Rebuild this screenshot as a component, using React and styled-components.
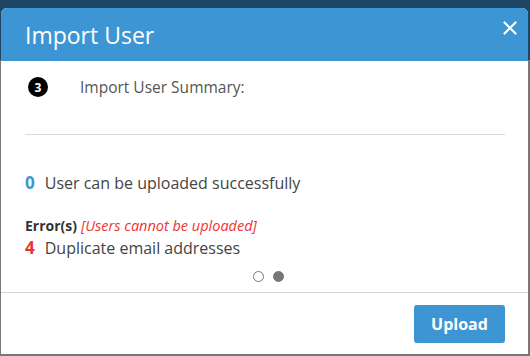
import React from "react";
import styled, { createGlobalStyle } from "styled-components";

const Global = createGlobalStyle`
  html, body { margin: 0; padding: 0; }
  body {
    width: 530px;
    height: 356px;
    overflow: hidden;
    background: linear-gradient(to bottom, #1d4566 0, #1d4566 60px, #777 60px, #777 100%);
    font-family: "Open Sans", "Lato", sans-serif;
  }
`;

const Page = styled.div`
  padding: 8px 2px 2px 1px;
  height: 356px;
  box-sizing: border-box;
  display: flex;
`;

const Modal = styled.div`
  flex: 1;
  display: flex;
  flex-direction: column;
  background: #fff;
  border-radius: 6px 6px 0 0;
  overflow: hidden;
`;

const Header = styled.div`
  height: 53px;
  background: #3d96d3;
  display: flex;
  align-items: center;
  justify-content: space-between;
  padding: 0 8px 0 24px;
  color: #fff;
`;

const Title = styled.h1`
  margin: 0;
  font-size: 23px;
  font-weight: 400;
`;

const Close = styled.button`
  border: 0;
  background: none;
  color: #fff;
  padding: 0;
  width: 20px;
  height: 20px;
  margin-top: -14px;
  display: flex;
  align-items: center;
  justify-content: center;
`;

const Body = styled.div`
  flex: 1;
  padding: 16px 23px 0 24px;
  display: flex;
  flex-direction: column;
`;

const StepRow = styled.div`
  display: flex;
  align-items: center;
  gap: 32px;
  padding-left: 3px;
  height: 20px;
`;

const StepBadge = styled.span`
  width: 20px;
  height: 20px;
  border-radius: 50%;
  background: #000;
  color: #fff;
  font-weight: 700;
  font-size: 12px;
  display: flex;
  align-items: center;
  justify-content: center;
`;

const StepLabel = styled.span`
  color: #555;
  font-size: 15.5px;
`;

const Divider = styled.hr`
  border: 0;
  border-top: 1px solid #d9d9d9;
  margin: 37px 0 0;
`;

const Line = styled.div`
  display: flex;
  align-items: baseline;
  gap: 10px;
  color: #444;
  font-size: 16px;
  line-height: 20px;
  margin-top: ${(p) => p.$mt || 0}px;
`;

const Count = styled.span`
  font-weight: 700;
  font-size: 17px;
  color: ${(p) => p.$color};
`;

const ErrorTitle = styled.div`
  display: flex;
  align-items: baseline;
  gap: 4px;
  margin-top: 24px;
  color: #333;
  font-size: 14px;
  line-height: 18px;
  font-weight: 700;
`;

const ErrorNote = styled.span`
  color: #ee3333;
  font-size: 14.5px;
  font-style: italic;
  font-weight: 400;
`;

const Dots = styled.div`
  display: flex;
  justify-content: center;
  gap: 9px;
  margin-top: 13px;
  padding-left: 7px;
`;

const Dot = styled.span`
  width: 9px;
  height: 9px;
  border-radius: 50%;
  border: 1px solid #777;
  background: ${(p) => (p.$active ? "#777" : "#fff")};
`;

const Footer = styled.div`
  border-top: 1px solid #d4d4d4;
  height: 62px;
  display: flex;
  justify-content: flex-end;
  align-items: flex-start;
  padding: 12px 23px 0 0;
  box-sizing: border-box;
`;

const Upload = styled.button`
  width: 91px;
  height: 38px;
  border: 0;
  border-radius: 3px;
  background: #3d96d3;
  color: #fff;
  font-family: inherit;
  font-weight: 700;
  font-size: 16px;
`;

export default function App() {
  return (
    <>
      <Global />
      <Page>
        <Modal>
          <Header>
            <Title>Import User</Title>
            <Close aria-label="Close">
              <svg width="14" height="14" viewBox="0 0 14 14">
                <path d="M1.5 1.5L12.5 12.5M12.5 1.5L1.5 12.5" stroke="#fff" strokeWidth="2.2" strokeLinecap="round" />
              </svg>
            </Close>
          </Header>
          <Body>
            <StepRow>
              <StepBadge>3</StepBadge>
              <StepLabel>Import User Summary:</StepLabel>
            </StepRow>
            <Divider />
            <Line $mt={38}>
              <Count $color="#3d96d3">0</Count>
              <span>User can be uploaded successfully</span>
            </Line>
            <ErrorTitle>
              Error(s) <ErrorNote>[Users cannot be uploaded]</ErrorNote>
            </ErrorTitle>
            <Line $mt={3}>
              <Count $color="#e8322f">4</Count>
              <span>Duplicate email addresses</span>
            </Line>
            <Dots>
              <Dot />
              <Dot $active />
            </Dots>
          </Body>
          <Footer>
            <Upload>Upload</Upload>
          </Footer>
        </Modal>
      </Page>
    </>
  );
}
